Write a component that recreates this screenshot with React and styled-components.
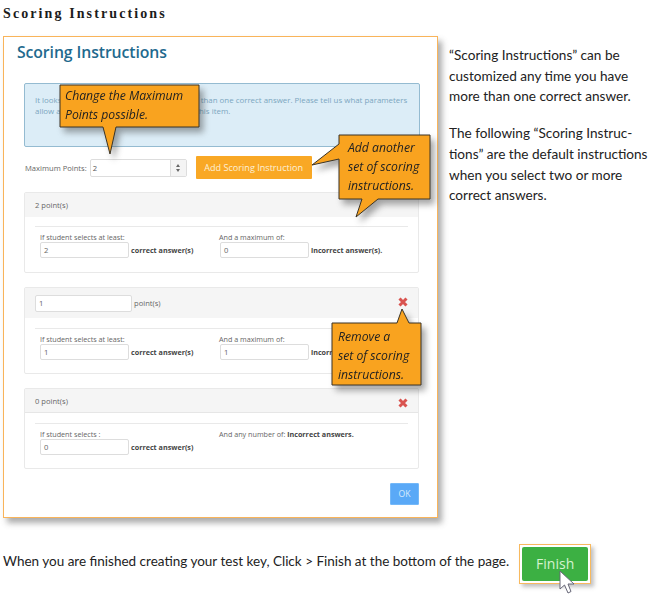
import React from "react";
import styled, { createGlobalStyle } from "styled-components";

const Global = createGlobalStyle`
  html, body { margin: 0; padding: 0; background: #fff; }
  body { width: 657px; height: 594px; overflow: hidden; font-family: "Open Sans", "Liberation Sans", sans-serif; }
`;
const Page = styled.div`position: relative; width: 657px; height: 594px; overflow: hidden;`;
const DocTitle = styled.h1`
  margin: 0; padding: 6px 0 0 3px; height: 36px; box-sizing: border-box;
  font: bold 14px/15px "Liberation Serif", serif; letter-spacing: 2.1px; color: #1c1c1c;
`;
const Main = styled.div`display: flex; align-items: flex-start; gap: 11px; padding-left: 3px;`;
const Modal = styled.section`
  box-sizing: border-box; width: 435px; height: 482px; padding: 0 17px 0 20px;
  border: 1px solid #f9b45a; background: #fff;
  box-shadow: 4px 5px 6px rgba(70,70,70,.45);
`;
const ModalTitle = styled.h2`
  margin: 0 0 0 -7px; padding: 4px 0 0; height: 46px; box-sizing: border-box;
  font: 600 15.8px/22px "Open Sans", sans-serif; color: #1f6a8e; letter-spacing: -.1px;
`;
const Alert = styled.div`
  box-sizing: border-box; height: 64px; padding: 11px 10px; border-radius: 2px;
  border: 1px solid #94bbd1; background: #dcedf7; color: #7ba6c0;
  font-size: 7.9px; line-height: 10.5px; white-space: nowrap;
`;
const PointsRow = styled.div`display: flex; align-items: center; height: 23px; margin-top: 9px; padding-left: 1px;`;
const Label = styled.span`font-size: 7.6px; color: #666; white-space: nowrap;`;
const Spinner = styled.div`
  display: flex; align-items: center; box-sizing: border-box; width: 97px; height: 18px; margin-left: 3px;
  border: 1px solid #ddd; border-radius: 2px; padding-left: 2px; font-size: 7.6px; color: #555;
  justify-content: space-between;
`;
const Arrows = styled.div`
  width: 15px; height: 16px; border-left: 1px solid #ddd; background: #f4f4f4;
  display: flex; flex-direction: column; align-items: center; justify-content: center; gap: 2px;
`;
const Arrow = styled.i`
  width: 0; height: 0; border-left: 2.5px solid transparent; border-right: 2.5px solid transparent;
  ${p => p.$up ? "border-bottom: 3px solid #666;" : "border-top: 3px solid #666;"}
`;
const AddButton = styled.div`
  box-sizing: border-box; width: 116px; height: 23px; margin-left: 9px; background: #f9a825; border-radius: 1px;
  color: #fdf0d8; font-size: 9.1px; display: flex; align-items: center; justify-content: center;
`;
const Panel = styled.div`
  box-sizing: border-box; height: ${p => p.$h}px; margin-top: ${p => p.$mt}px; width: 395px;
  border: 1px solid #e9e9e9; border-radius: 2px; background: #fff;
`;
const PanelHead = styled.div`
  box-sizing: border-box; height: ${p => p.$h}px; background: #f5f5f5; padding: 0 10px;
  display: flex; align-items: center; gap: 2px; position: relative;
  border-bottom: ${p => p.$line ? "1px solid #e6e6e6" : "none"};
`;
const PanelBody = styled.div`
  margin: ${p => p.$gap}px 10px 0; border-top: 1px solid #e9e9e9; padding: 6px 5px 0;
  display: grid; grid-template-columns: 179px 1fr;
`;
const Field = styled.div`display: flex; flex-direction: column; gap: 0;`;
const FieldLabel = styled.div`font-size: 7.2px; line-height: 9px; color: #666; white-space: nowrap; b { color: #444; }`;
const InputRow = styled.div`display: flex; align-items: center; gap: 2px;`;
const Input = styled.div`
  box-sizing: border-box; width: ${p => p.$w || 89}px; height: ${p => p.$hgt || 16}px; margin-left: ${p => p.$ml || 0}px;
  border: 1px solid #ddd; border-radius: 2px; background: #fff;
  padding-left: 3px; font-size: 7.6px; color: #666; display: flex; align-items: center;
`;
const Bold = styled.b`font-size: 7.2px; color: #444; white-space: nowrap;`;
const Remove = styled.svg`position: absolute; right: 10px; top: ${p => p.$top}px;`;
const ModalFoot = styled.div`display: flex; justify-content: flex-end; margin-top: 14px; padding-right: 1px;`;
const Ok = styled.div`
  box-sizing: border-box; width: 29px; height: 22px; background: #5aa9f7; border: 1px solid #74b8f8; border-radius: 1px;
  color: #d7eafd; font-size: 8.6px; display: flex; align-items: center; justify-content: center;
`;
const Aside = styled.aside`
  width: 206px; padding-top: 9px; font: 13.6px/20.7px Lato, "Liberation Sans", sans-serif; color: #222;
  p { margin: 0 0 16px; white-space: nowrap; }
`;
const Footer = styled.div`
  display: flex; align-items: flex-start; padding: 26px 0 0 3px; height: 40px;
`;
const FooterText = styled.span`
  margin-top: 7px; font: 13.5px/20px Lato, "Liberation Sans", sans-serif; color: #222; white-space: nowrap;
`;
const FinishFrame = styled.div`
  position: relative; box-sizing: border-box; width: 72px; height: 40px; margin-left: 10px; padding: 2px;
  border: 1px solid #f8b95e; background: #fff; box-shadow: 3px 3px 4px rgba(80,80,80,.35);
`;
const Finish = styled.div`
  width: 100%; height: 100%; background: #3cb043; border-radius: 2px; color: #d5f3d0;
  font: 500 14px/1 "Open Sans", sans-serif; display: flex; align-items: center; justify-content: center;
`;
const Cursor = styled.svg`position: absolute; left: 39px; top: 25px;`;
const Callout = styled.div`
  position: absolute; left: ${p => p.$x}px; top: ${p => p.$y}px; width: ${p => p.$w}px; height: ${p => p.$h}px;
  filter: drop-shadow(4px 5px 3px rgba(60,60,60,.45));
  font: italic 12.2px/19px "Open Sans", sans-serif; color: #222;
`;
const CalloutShape = styled.svg`position: absolute; left: 0; top: 0; overflow: visible;`;
const CalloutText = styled.div`position: relative; white-space: pre; padding: ${p => p.$pad};`;

const X = ({ top }) => (
  <Remove $top={top} width="10" height="10" viewBox="0 0 10 10">
    <path d="M1.5 1.5 L8.5 8.5 M8.5 1.5 L1.5 8.5" stroke="#d9534f" strokeWidth="3" />
  </Remove>
);

const Bubble = ({ x, y, w, h, points, pad, children }) => (
  <Callout $x={x} $y={y} $w={w} $h={h}>
    <CalloutShape width={w} height={h}>
      <polygon points={points} fill="#f9a31f" stroke="#3a3326" strokeWidth="1" />
    </CalloutShape>
    <CalloutText $pad={pad}>{children}</CalloutText>
  </Callout>
);

export default function App() {
  return (
    <Page>
      <Global />
      <DocTitle>Scoring Instructions</DocTitle>
      <Main>
        <Modal>
          <ModalTitle>Scoring Instructions</ModalTitle>
          <Alert>
            It looks like you have indicated there is more than one correct answer. Please tell us what parameters<br />
            allow a student to receive partial credits for this item.
          </Alert>
          <PointsRow>
            <Label>Maximum Points:</Label>
            <Spinner>2<Arrows><Arrow $up /><Arrow /></Arrows></Spinner>
            <AddButton>Add Scoring Instruction</AddButton>
          </PointsRow>
          <Panel $h={81} $mt={13}>
            <PanelHead $h={24}><Label>2 point(s)</Label></PanelHead>
            <PanelBody $gap={9}>
              <Field>
                <FieldLabel>If student selects at least:</FieldLabel>
                <InputRow><Input>2</Input><Bold>correct answer(s)</Bold></InputRow>
              </Field>
              <Field>
                <FieldLabel>And a maximum of:</FieldLabel>
                <InputRow><Input $ml={1}>0</Input><Bold>incorrect answer(s).</Bold></InputRow>
              </Field>
            </PanelBody>
          </Panel>
          <Panel $h={87} $mt={14}>
            <PanelHead $h={30}>
              <Input $w={97} $hgt={17}>1</Input><Label>point(s)</Label>
              <X top={9} />
            </PanelHead>
            <PanelBody $gap={10}>
              <Field>
                <FieldLabel>If student selects at least:</FieldLabel>
                <InputRow><Input>1</Input><Bold>correct answer(s)</Bold></InputRow>
              </Field>
              <Field>
                <FieldLabel>And a maximum of:</FieldLabel>
                <InputRow><Input $ml={1}>1</Input><Bold>incorrect answer(s).</Bold></InputRow>
              </Field>
            </PanelBody>
          </Panel>
          <Panel $h={81} $mt={14}>
            <PanelHead $h={24} $line>
              <Label>0 point(s)</Label>
              <X top={9} />
            </PanelHead>
            <PanelBody $gap={10}>
              <Field>
                <FieldLabel>If student selects :</FieldLabel>
                <InputRow><Input>0</Input><Bold>correct answer(s)</Bold></InputRow>
              </Field>
              <Field>
                <FieldLabel>And any number of: <b>incorrect answers.</b></FieldLabel>
              </Field>
            </PanelBody>
          </Panel>
          <ModalFoot><Ok>OK</Ok></ModalFoot>
        </Modal>
        <Aside>
          <p>“Scoring Instructions” can be<br />customized any time you have<br />more than one correct answer.</p>
          <p>The following “Scoring Instruc-<br />tions” are the default instructions<br />when you select two or more<br />correct answers.</p>
        </Aside>
      </Main>
      <Footer>
        <FooterText>When you are finished creating your test key, Click &gt; Finish at the bottom of the page.</FooterText>
        <FinishFrame>
          <Finish>Finish</Finish>
          <Cursor width="22" height="26" viewBox="0 0 22 26">
            <path d="M1 1 L1 19 L5.5 15 L9 23 L12 21.5 L9 14 L15 14 Z" fill="#fff" stroke="#667" strokeWidth="1" />
          </Cursor>
        </FinishFrame>
      </Footer>
      <Bubble x={60} y={85} w={139} h={42} pad="1px 0 0 5px"
        points="0,0 139,0 139,42 56,42 50,69 43,42 0,42">
        {"Change the Maximum\nPoints possible."}
      </Bubble>
      <Bubble x={339} y={135} w={91} h={64} pad="3px 0 0 9px"
        points="0,0 91,0 91,64 39,64 17,82 23,64 0,64 0,24 -27,30 0,9">
        {"Add another\nset of scoring\ninstructions."}
      </Bubble>
      <Bubble x={332} y={323} w={89} h={62} pad="4px 0 0 6px"
        points="0,0 65,0 70,-14 77,0 89,0 89,62 0,62">
        {"Remove a\nset of scoring\ninstructions."}
      </Bubble>
    </Page>
  );
}
